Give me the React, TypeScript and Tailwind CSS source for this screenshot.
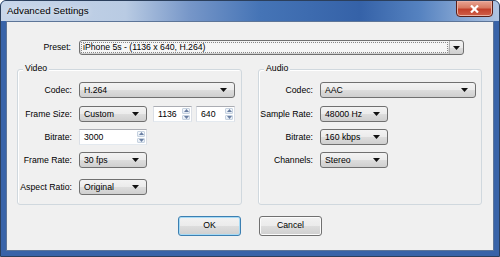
import React from 'react'

const font = { fontFamily: '"Liberation Sans", Arial, sans-serif' }

function Arrow() {
  return (
    <svg width="7" height="4" viewBox="0 0 7 4" className="shrink-0">
      <path d="M0 0 H7 L3.5 4 Z" fill="#111" />
    </svg>
  )
}

function Select({ value, w }: { value: string; w: string }) {
  return (
    <div
      className={`${w} h-[16px] flex items-center justify-between rounded-[3px] border border-[#707070] bg-[linear-gradient(to_bottom,#f3f3f3_0%,#ebebeb_50%,#dddddd_51%,#cfcfcf_100%)] pl-[4px] pr-[7px] text-[8.7px] text-black leading-none`}
    >
      <span>{value}</span>
      <Arrow />
    </div>
  )
}

function SpinArrow({ up }: { up?: boolean }) {
  return (
    <svg width="5" height="3" viewBox="0 0 5 3">
      <path d={up ? 'M0 3 H5 L2.5 0 Z' : 'M0 0 H5 L2.5 3 Z'} fill="#6a7fa3" />
    </svg>
  )
}

function Spin({ value, w }: { value: string; w: string }) {
  return (
    <div
      className={`${w} h-[16px] flex items-stretch border border-[#abadb3] border-b-[#e3e9ef] border-x-[#dbdfe6] bg-white text-[8.7px] leading-none text-black`}
    >
      <div className="flex-1 flex items-center pl-[4px]">{value}</div>
      <div className="w-[10px] flex flex-col gap-px p-px">
        <div className="flex-1 flex items-center justify-center rounded-[1px] border border-[#c6d2e0] bg-[linear-gradient(to_bottom,#f6f9fc,#e2eaf3)]">
          <SpinArrow up />
        </div>
        <div className="flex-1 flex items-center justify-center rounded-[1px] border border-[#c6d2e0] bg-[linear-gradient(to_bottom,#f6f9fc,#e2eaf3)]">
          <SpinArrow />
        </div>
      </div>
    </div>
  )
}

function Row({ label, children, className = '' }: { label: string; children: React.ReactNode; className?: string }) {
  return (
    <div className={`flex items-center gap-[7px] ${className}`}>
      <div className="w-[54px] text-right text-[8.7px] leading-none text-black whitespace-nowrap">{label}</div>
      {children}
    </div>
  )
}

function Group({ title, children, className = '' }: { title: string; children: React.ReactNode; className?: string }) {
  return (
    <div className={`relative border border-[#d0d8de] rounded-[3px] shadow-[inset_1px_1px_0_#fff] pt-[12px] pb-[9px] ${className}`}>
      <div className="absolute -top-[6px] left-[5px] bg-[#f0f0f0] px-[2px] text-[8.7px] leading-none text-black">{title}</div>
      {children}
    </div>
  )
}

function Button({ label, focused }: { label: string; focused?: boolean }) {
  return (
    <div
      className={`w-[63px] h-[20px] flex items-center justify-center rounded-[3px] border ${
        focused ? 'border-[#3c7fb1] shadow-[inset_0_0_0_1px_#a6daf5]' : 'border-[#707070] shadow-[inset_0_0_0_1px_#fbfbfb]'
      } bg-[linear-gradient(to_bottom,#f2f2f2_0%,#ebebeb_50%,#dddddd_51%,#cfcfcf_100%)] text-[8.7px] text-black`}
    >
      {label}
    </div>
  )
}

export default function App() {
  return (
    <div className="w-[500px] h-[257px] bg-white" style={font}>
      <div className="relative w-[500px] h-[257px] flex flex-col rounded-t-[6px] border border-[#2b3f5c] bg-[#3863a8] overflow-hidden">
        {/* title bar */}
        <div className="h-[20px] shrink-0 flex items-center pl-[6px] bg-[linear-gradient(to_right,#c8d6e9_0%,#b9cbe3_25%,#7696c8_38%,#4574b6_52%,#3562a8_72%,#5582c0_84%,#afc5e3_100%)]">
          <span className="text-[9.8px] text-black [text-shadow:0_0_6px_#fff]">Advanced Settings</span>
        </div>
        <div className="absolute top-[-1px] right-[6px] w-[37px] h-[17px] rounded-b-[4px] border border-[#5a1f17] bg-[linear-gradient(to_bottom,#e8a493_0%,#d77a62_45%,#c2402a_55%,#d0604a_100%)] shadow-[inset_0_0_0_1px_#eab0a2] flex items-center justify-center">
          <svg width="9" height="8" viewBox="0 0 9 8">
            <path d="M1 0.5 L8 7.5 M8 0.5 L1 7.5" stroke="#fff" strokeWidth="2.2" />
          </svg>
        </div>
        {/* body */}
        <div className="flex-1 px-[5px] pb-[5px] flex">
          <div className="flex-1 border border-[#5d7598] bg-[#f0f0f0] flex flex-col">
            <div className="flex items-center gap-[8px] mt-[18px]">
              <div className="w-[64px] text-right text-[8.7px] leading-none text-black">Preset:</div>
              <div className="w-[385px] h-[15px] flex items-stretch rounded-[3px] border border-[#707070] bg-[linear-gradient(to_bottom,#f3f3f3_0%,#ebebeb_50%,#dddddd_51%,#cfcfcf_100%)]">
                <div className="flex-1 m-[1px] flex items-center pl-[1px] border border-dotted border-[#888] bg-[#f6f6f6] text-[8.7px] leading-none text-black">
                  iPhone 5s - (1136 x 640, H.264)
                </div>
                <div className="w-[14px] flex items-center justify-center border-l border-[#b0b0b0]">
                  <Arrow />
                </div>
              </div>
            </div>
            <div className="flex gap-[16px] ml-[10px] mr-[11px] mt-[14px]">
              <Group title="Video" className="w-[225px]">
                <Row label="Codec:">
                  <Select value="H.264" w="w-[156px]" />
                </Row>
                <Row label="Frame Size:" className="mt-[8px]">
                  <Select value="Custom" w="w-[68px]" />
                  <div className="flex gap-[4px] ml-[-1px]">
                    <Spin value="1136" w="w-[39px]" />
                    <Spin value="640" w="w-[39px]" />
                  </div>
                </Row>
                <Row label="Bitrate:" className="mt-[7px]">
                  <Spin value="3000" w="w-[68px]" />
                </Row>
                <Row label="Frame Rate:" className="mt-[7px]">
                  <Select value="30 fps" w="w-[68px]" />
                </Row>
                <Row label="Aspect Ratio:" className="mt-[11px]">
                  <Select value="Original" w="w-[68px]" />
                </Row>
              </Group>
              <Group title="Audio" className="flex-1">
                <Row label="Codec:">
                  <Select value="AAC" w="w-[156px]" />
                </Row>
                <Row label="Sample Rate:" className="mt-[8px]">
                  <Select value="48000 Hz" w="w-[68px]" />
                </Row>
                <Row label="Bitrate:" className="mt-[7px]">
                  <Select value="160 kbps" w="w-[68px]" />
                </Row>
                <Row label="Channels:" className="mt-[7px]">
                  <Select value="Stereo" w="w-[68px]" />
                </Row>
              </Group>
            </div>
            <div className="flex justify-center gap-[18px] mt-[11px]">
              <Button label="OK" focused />
              <Button label="Cancel" />
            </div>
          </div>
        </div>
      </div>
    </div>
  )
}
